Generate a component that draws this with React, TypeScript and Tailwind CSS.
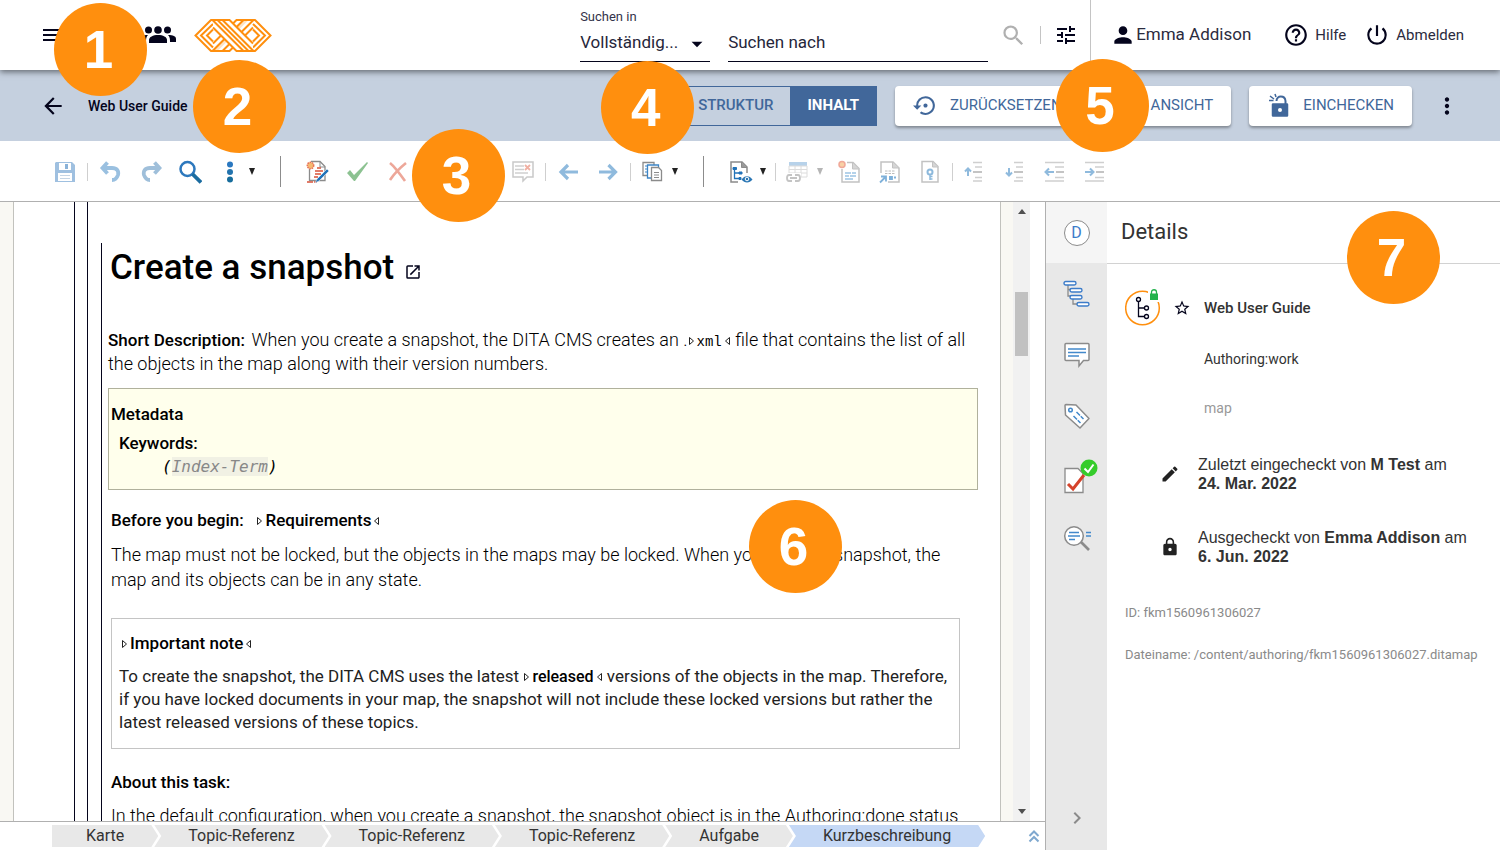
import React from "react";
import {
	MdArrowBack,
	MdArrowDropDown,
	MdChevronRight,
	MdEdit,
	MdHelpOutline,
	MdLock,
	MdMenu,
	MdMoreVert,
	MdOpenInNew,
	MdPerson,
	MdPowerSettingsNew,
	MdSearch,
	MdSettingsBackupRestore,
	MdStarBorder,
	MdTune,
	MdVisibility,
} from "react-icons/md";

function Badge({ n, className }: { n: number; className: string }) {
	return (
		<div
			className={`absolute z-30 flex size-[93px] items-center justify-center rounded-full bg-[#ff8f0e] pr-1 font-['Liberation_Sans',sans-serif] text-[53px] leading-none font-bold text-white ${className}`}
		>
			{n}
		</div>
	);
}

// one diagonal band of the logo, the other one is its mirror image
const band = "M19 8.500L42.500 32M18.500 1L49.500 32M28.500 1L59.500 32M35.500 1L59 24.500";
const arms = "M17 1L1.500 16.500 17 32M19 5L7 16.500 19 28.500M19 10.500L13 16.500 19 22.500M16.500 1H36M16.500 32H36";

function Logo() {
	return (
		<svg width="78" height="33" viewBox="0 0 78 33" fill="none" stroke="#ff8f0e" strokeWidth="2">
			<path d={arms} />
			<path d={arms} transform="matrix(-1 0 0 1 78 0)" />
			<path d={band} transform="matrix(-1 0 0 1 78 0)" />
			<path d="M23.500 1h5l31 31h-5z" transform="matrix(-1 0 0 1 78 0)" fill="#ff8f0e" stroke="none" opacity="0.25" />
			<path d="M19 8.500V2h17.500L59 24.500V31H42.500z" fill="#fff" stroke="none" />
			<path d={band} />
			<path d="M23.500 1l31 31" />
		</svg>
	);
}

function GroupIcon() {
	return (
		<svg width="36" height="20" viewBox="0 0 36 20" fill="#04041c">
			<circle cx="8.5" cy="5" r="3.5" />
			<circle cx="18" cy="5" r="3.8" />
			<circle cx="27.5" cy="5" r="3.5" />
			<path d="M9 18v-3c0-3 4-5 9-5s9 2 9 5v3z" />
			<path d="M0 17v-3c0-3 3-4 8-4-2 2-2 4-2 7zM36 17v-3c0-3-3-4-8-4 2 2 2 4 2 7z" />
		</svg>
	);
}

/* toolbar pieces */
function Tool({ label, children }: { label: string; children?: React.ReactNode }) {
	return (
		<button type="button" aria-label={label} className="flex h-10 w-10 shrink-0 items-center justify-center">
			<svg width="24" height="24" viewBox="0 0 24 24" fill="none">
				{children}
			</svg>
		</button>
	);
}

function Caret({ muted }: { muted?: boolean }) {
	return (
		<span className="z-10 -ml-2 flex w-5 shrink-0 justify-center">
			<svg width="6" height="7" viewBox="0 0 6 7" fill={muted ? "#b5b5b5" : "#222"}>
				<path d="M0 0h6L3 7z" />
			</svg>
		</span>
	);
}

function Sep() {
	return (
		<span className="flex w-[5px] shrink-0 justify-center">
			<span className="h-[18px] w-px bg-[#cfcfcf]" />
		</span>
	);
}

function TallSep() {
	return (
		<span className="flex w-9 shrink-0 justify-center">
			<span className="h-[31px] w-px bg-[#8c8c8c]" />
		</span>
	);
}

function Toolbar() {
	return (
		<div className="relative flex h-[61px] shrink-0 items-center border-b border-[#b0b0b0] bg-white px-[45px] pt-px">
			<Tool label="Speichern">
				<path d="M3 2h16l3 3v17H2V3z" fill="#9fc0e0" />
				<path d="M6 3h12v7H6z" fill="#fff" />
				<path d="M12 4h3v5h-3z" fill="#8ab2d8" />
				<path d="M5 13h14v8H5z" fill="#fff" />
				<path d="M7 15.500h10M7 18.500h10" stroke="#c5d5e5" />
			</Tool>
			<Sep />
			<Tool label="Rückgängig">
				<path d="M9.500 2.500L4.500 8l5 5.500M5 8h9c5 0 7 3 6 7-1 3-3 5-6 5" stroke="#9ac0e0" strokeWidth="3.8" />
			</Tool>
			<Tool label="Wiederherstellen">
				<path d="M16.500 2.500l5 5.500-5 5.500M21 8h-9c-5 0-7 3-6 7 1 3 3 5 6 5" stroke="#9fbfda" strokeWidth="3.800" />
			</Tool>
			<Tool label="Suchen">
				<circle cx="9.500" cy="9" r="7" stroke="#2d78bd" strokeWidth="2.500" />
				<path d="M14.500 14l8.500 8.500" stroke="#1b6ca0" strokeWidth="3.800" />
			</Tool>
			<Tool label="Mehr">
				<circle cx="12" cy="4.500" r="3" fill="#2b78c0" />
				<circle cx="12" cy="12" r="3" fill="#2273ae" />
				<circle cx="12" cy="19.500" r="3" fill="#176d9c" />
			</Tool>
			<Caret />
			<TallSep />
			<Tool label="Änderungen verfolgen">
				<path d="M5 1.500h9l5 5v14H3.500V9" stroke="#8b8b8b" strokeWidth="1.300" />
				<path d="M14 2v5h5" stroke="#8b8b8b" />
				<path d="M11 8h4M9 11h8M9 14h6M8 17h4M1 22h6M8 22h3" stroke="#d9533a" strokeWidth="1.500" />
				<circle cx="4.500" cy="5.500" r="3.200" fill="#f5b971" stroke="#e8735a" strokeWidth="1.500" strokeDasharray="1.5 0.800" />
				<path d="M21 9l2 2-10 10-4 2 2-4z" fill="#2273b9" stroke="#fff" strokeWidth="0.500" />
			</Tool>
			<Tool label="Änderung annehmen">
				<path d="M1 13l3-3 4 5L21 2l1 1L9 21H8z" fill="#8cc291" />
			</Tool>
			<Tool label="Änderung ablehnen">
				<path d="M4 3c5 4 10 11 15 18M20 3C15 7 8 14 4 20" stroke="#eda799" strokeWidth="2.600" />
			</Tool>
			<Tool label="Kommentar" />
			<Tool label="Hervorheben" />
			<Sep />
			<Tool label="Kommentar löschen">
				<path d="M2 2h20v15h-6l-4 4v-4H2z" stroke="#c9c9c9" strokeWidth="1.500" fill="#fff" />
				<path d="M4 6h9M4 9.500h9M4 13h13" stroke="#cfcfcf" strokeWidth="1.300" />
				<path d="M14 5l5 5M19 5l-5 5" stroke="#f0b0a3" strokeWidth="1.800" />
			</Tool>
			<Sep />
			<Tool label="Zurück">
				<path d="M5 12h17M12 5l-7 7 7 7" stroke="#8fbadd" strokeWidth="3.200" />
			</Tool>
			<Tool label="Vor">
				<path d="M3 12h17M12.500 5l7 7-7 7" stroke="#8fbadd" strokeWidth="3.200" />
			</Tool>
			<Sep />
			<Tool label="Einfügen">
				<path d="M2 2.500h11v13H2z" stroke="#8b8b8b" fill="#fff" strokeWidth="1.300" />
				<path d="M4 6h2M4 9h2M4 12h2" stroke="#3d85c6" />
				<path d="M6.500 5h11v13h-11z" stroke="#3d85c6" fill="#fff" strokeWidth="1.300" />
				<path d="M10.500 7.500h7l3 3v10h-10z" stroke="#8b8b8b" fill="#fff" strokeWidth="1.300" />
				<path d="M13 12.500h5M13 15h5M13 17.500h5" stroke="#8b8b8b" />
			</Tool>
			<Caret />
			<TallSep />
			<Tool label="Ansicht">
				<path d="M18 13V7l-5-5H2v20h7" stroke="#8b8b8b" strokeWidth="1.500" />
				<path d="M12.500 2v5.500H18" stroke="#8b8b8b" fill="#999" />
				<path d="M5.500 9v9.500H10M5.500 13H10" stroke="#2273b9" strokeWidth="1.300" />
				<path d="M4 7.500h3.500v2H4zM10 12h3v2h-3zM10 17.500h2v2h-2z" stroke="#2273b9" fill="#2273b9" />
				<path d="M12.500 19.500c3-4.500 8-4.500 11 0-3 4-8 4-11 0z" fill="#2a76b4" />
				<circle cx="18" cy="19" r="1.800" fill="#2a76b4" stroke="#fff" />
			</Tool>
			<Caret />
			<Sep />
			<Tool label="Tabelle">
				<path d="M3 2h18v4H3z" fill="#b7d2ea" />
				<path d="M3 6h18v11H3zM3 9.500h18M3 13h18M9 6v11M15 6v11" stroke="#dcdcdc" />
				<path d="M0 13h15v10H0z" fill="#fff" />
				<path d="M6 15H3q-2 0-2 3t2 3h3M9 15h3q2 0 2 3t-2 3H9M4 18h7" stroke="#c4c4c4" strokeWidth="1.800" />
			</Tool>
			<Caret muted />
			<Tool label="Neues Thema">
				<path d="M9 2.500h6l6 6V22H4V9" stroke="#c2c2c2" strokeWidth="1.500" />
				<path d="M14.500 3v6H21" stroke="#c2c2c2" fill="#d5d5d5" />
				<path d="M7 13h6M14 13h4M7 16h4M12 16h6M7 19h8" stroke="#9cc3e3" strokeWidth="1.300" />
				<circle cx="4" cy="4.500" r="3" fill="#f8d0a5" stroke="#f0a898" strokeWidth="1.500" />
			</Tool>
			<Tool label="Referenz">
				<path d="M3 13V2h12l6 6v14H10" stroke="#c2c2c2" strokeWidth="1.500" />
				<path d="M14.500 2v6H21" stroke="#c2c2c2" fill="#d5d5d5" />
				<path d="M7 11h10M7 13.500h10" stroke="#bcbcbc" strokeDasharray="2.500 1" />
				<path d="M2 22.500l5-5M3 16.500h5v5M11 17h3v2h-3M16 17.500h2" stroke="#7fb1da" strokeWidth="1.800" />
			</Tool>
			<Tool label="Schlüssel">
				<path d="M4 1.500h11l5 5V22H4z" stroke="#c2c2c2" strokeWidth="1.500" />
				<path d="M14.500 2v5H20" stroke="#c2c2c2" fill="#d5d5d5" />
				<circle cx="12" cy="12" r="2.500" stroke="#8db9dc" strokeWidth="2" />
				<path d="M12 14.500V20M12 16.500h2.500M12 19h2.500" stroke="#8db9dc" strokeWidth="1.500" />
			</Tool>
			<Sep />
			<Tool label="Nach oben">
				<path d="M10 2.500h9M12 7h7M12 17.500h7M10 21h9" stroke="#cfcfcf" strokeWidth="1.500" />
				<path d="M10 12h9" stroke="#b0b0b0" strokeWidth="1.500" />
				<path d="M5 16V9M2 11.500l3-3 3 3" stroke="#8fbadd" strokeWidth="2" />
			</Tool>
			<Tool label="Nach unten">
				<path d="M11 2.500h9M13 7h7M13 17.500h7M11 21h9" stroke="#cfcfcf" strokeWidth="1.500" />
				<path d="M11 12h9" stroke="#b0b0b0" strokeWidth="1.500" />
				<path d="M6 8v7M3 12.500l3 3 3-3" stroke="#8fbadd" strokeWidth="2" />
			</Tool>
			<Tool label="Höher stufen">
				<path d="M2 2.500h19M12 7h9M12 17.500h9M2 21h19" stroke="#cfcfcf" strokeWidth="1.500" />
				<path d="M13 12h8" stroke="#b0b0b0" strokeWidth="1.500" />
				<path d="M3 12h8M6 8.500L2.500 12 6 15.500" stroke="#8fbadd" strokeWidth="2" />
			</Tool>
			<Tool label="Tiefer stufen">
				<path d="M2 2.500h19M12 7h9M12 17.500h9M2 21h19" stroke="#cfcfcf" strokeWidth="1.500" />
				<path d="M13 12h8" stroke="#b0b0b0" strokeWidth="1.500" />
				<path d="M2 12h8M7 8.500l3.500 3.500L7 15.500" stroke="#8fbadd" strokeWidth="2" />
			</Tool>
			<Badge n={3} className="-top-3 left-[412px]" />
		</div>
	);
}

/* tag markers around inline elements */
function Mark({ children, className = "" }: { children: React.ReactNode; className?: string }) {
	return (
		<span className={`leading-none ${className}`}>
			<svg className="mr-0.5 inline align-baseline" width="7" height="10" viewBox="0 0 7 10" fill="none" stroke="#222">
				<path d="M1.500 1.500v7l4-3.500z" />
			</svg>
			{children}
			<svg className="ml-0.5 inline align-baseline" width="7" height="10" viewBox="0 0 7 10" fill="none" stroke="#222">
				<path d="M5.500 1.500v7l-4-3.500z" />
			</svg>
		</span>
	);
}

function Header() {
	return (
		<header className="relative z-20 flex h-[70px] shrink-0 items-stretch bg-white shadow-[0_2px_6px_rgba(0,0,0,0.5)]">
			<div className="flex flex-1 items-center pl-10">
				<button type="button" aria-label="Menü">
					<MdMenu size={24} color="#04041c" />
				</button>
				<button type="button" aria-label="Gruppen" className="ml-[76px]">
					<GroupIcon />
				</button>
				<a href="#" aria-label="Startseite" className="ml-[18px]">
					<Logo />
				</a>
			</div>
			<div className="flex h-[62px] gap-[18px]">
				<div className="relative flex w-[130px] flex-col border-b border-[#04041c] pt-2">
					<label htmlFor="scope" className="text-[13px] leading-[18px] text-[#33334a]">
						Suchen in
					</label>
					<select id="scope" className="h-[34px] w-full appearance-none bg-transparent text-[17px] text-[#26263a] outline-none">
						<option>Vollständig...</option>
					</select>
					<MdArrowDropDown className="pointer-events-none absolute right-0 bottom-1" size={26} color="#04041c" />
				</div>
				<input
					aria-label="Suchen nach"
					placeholder="Suchen nach"
					className="w-[260px] border-b border-[#04041c] pt-6 text-[17px] outline-none placeholder:text-[#26263a]"
				/>
			</div>
			<div className="flex items-center border-r border-[#c4c4c4] pr-3 pl-3">
				<button type="button" aria-label="Suchen">
					<MdSearch size={27} color="#b0b0b0" />
				</button>
				<span className="mx-[13px] h-[18px] w-px bg-[#c4c4c4]" />
				<button type="button" aria-label="Filter">
					<MdTune size={24} color="#04041c" />
				</button>
			</div>
			<div className="flex items-center pr-9 pl-[19px] text-[15px] text-[#2b2b3e]">
				<a href="#" className="flex items-center text-[17px]">
					<MdPerson size={26} color="#04041c" />
					Emma Addison
				</a>
				<a href="#" className="ml-8 flex items-center gap-[6px]">
					<MdHelpOutline size={26} color="#04041c" />
					Hilfe
				</a>
				<a href="#" className="ml-[18px] flex items-center gap-[6px]">
					<MdPowerSettingsNew size={26} color="#04041c" />
					Abmelden
				</a>
			</div>
			<Badge n={1} className="top-[3px] left-[54px]" />
		</header>
	);
}

const barButton = "flex h-10 items-center rounded bg-white px-[18px] text-[#41679a] shadow-[0_2px_3px_rgba(0,0,0,0.35)]";

function ActionBar() {
	return (
		<div className="relative flex h-[71px] shrink-0 items-center bg-[#c5d0df] pr-10 pl-10 text-[15px]">
			<button type="button" aria-label="Zurück">
				<MdArrowBack size={26} color="#04041c" />
			</button>
			<h2 className="ml-[22px] flex-1 text-sm font-medium text-[#04041c]">Web User Guide</h2>
			<div className="relative flex h-10 border border-[#41679a] font-medium">
				<button type="button" className="px-[17px] text-[#41679a]">
					STRUKTUR
				</button>
				<button type="button" className="bg-[#41679a] px-[17px] font-bold text-white">
					INHALT
				</button>
				<Badge n={4} className="-top-[26px] -left-[80px]" />
			</div>
			<button type="button" className={`${barButton} ml-[18px] gap-3`}>
				<MdSettingsBackupRestore size={25} />
				ZURÜCKSETZEN
			</button>
			<div className="relative ml-[18px]">
				<button type="button" className={`${barButton} gap-[10px]`}>
					<MdVisibility size={25} />
					ANSICHT
				</button>
				<Badge n={5} className="-top-[27px] -left-[42px]" />
			</div>
			<button type="button" className={`${barButton} ml-[18px] gap-[10px]`}>
				<svg width="26" height="26" viewBox="0 0 26 26" fill="none" stroke="#41679a">
					<path d="M6 11.500h14v11H6z" fill="#41679a" strokeWidth="2.500" strokeLinejoin="round" />
					<path d="M9.500 8c0-6 8.500-6 9 0v3" strokeWidth="2" />
					<path d="M2 7.500h4.500M3 3l4 3M8 1l1 3" strokeWidth="1.500" />
					<circle cx="13" cy="17" r="2" fill="#fff" stroke="none" />
				</svg>
				EINCHECKEN
			</button>
			<button type="button" aria-label="Mehr" className="ml-[22px]">
				<MdMoreVert size={26} color="#04041c" />
			</button>
			<Badge n={2} className="-top-[10px] left-[193px]" />
		</div>
	);
}

function Editor() {
	return (
		<div className="relative flex min-h-0 flex-1 overflow-hidden">
			<div className="w-[13px] shrink-0 bg-[#f9f8f3]" />
			<div className="flex flex-1 border-x border-[#c2c2bd] pl-[60px]">
				<div className="border-l border-[#04041c] pl-3" />
				<div className="flex-1 border-l border-[#04041c] pt-[41px] pr-[22px] pl-[13px]">
					<div className="h-full border-l border-[#04041c] pl-[6px] text-[17px] leading-6 text-[#222]">
						<h1 className="flex items-center gap-[10px] pt-[3px] pl-[2px] text-[35px] leading-[44px] font-medium text-black">
							Create a snapshot
							<MdOpenInNew size={18} color="#04041c" className="mt-2" />
						</h1>
						<p className="mt-[38px] text-lg leading-6 font-light text-black">
							<b className="mr-0.5 text-[17px] leading-none font-medium">Short Description:</b> When you create a snapshot, the DITA
							CMS creates an .<Mark className="font-['Liberation_Mono',monospace] text-[14px]">xml</Mark> file that contains the
							list of all the objects in the map along with their version numbers.
						</p>
						<section className="mt-3 h-[102px] border border-[#b0b19c] bg-[#ffffec] px-[2px] pt-[13px] font-medium text-black">
							<h3 className="leading-6">Metadata</h3>
							<h4 className="mt-[5px] pl-2 leading-6">Keywords:</h4>
							<p className="pl-[51px] font-['DejaVu_Sans_Mono',monospace] text-base font-normal italic">
								(<span className="bg-[#f1f1e4] text-[#888]">Index-Term</span>)
							</p>
						</section>
						<div className="pl-[3px]">
							<h3 className="mt-[18px] font-medium text-black">
								Before you begin: &nbsp;&nbsp;
								<Mark>Requirements</Mark>
							</h3>
							<p className="mt-[10px] mr-3 text-lg leading-[25px] font-light text-black">
								The map must not be locked, but the objects in the maps may be locked. When you create a snapshot, the map and its
								objects can be in any state.
							</p>
							<section className="mt-[26px] mr-[18px] h-[131px] border border-[#c4c4c4] px-[7px] pt-3">
								<h4 className="pl-[2px] leading-6 font-medium text-black">
									<Mark>Important note</Mark>
								</h4>
								<p className="mt-[10px] leading-[23px]">
									To create the snapshot, the DITA CMS uses the latest{" "}
									<Mark className="text-base font-medium text-black">released</Mark> versions of the objects in the map. Therefore, if
									you have locked documents in your map, the snapshot will not include these locked versions but rather the latest
									released versions of these topics.
								</p>
							</section>
							<h3 className="mt-[21px] font-medium text-black">About this task:</h3>
							<p className="mt-[9px] text-lg leading-[25px] font-light text-black">
								In the default configuration, when you create a snapshot, the snapshot object is in the Authoring:done status
							</p>
						</div>
					</div>
				</div>
			</div>
			<div className="w-3 shrink-0 bg-[#f9f8f3]" />
			{/* scrollbar */}
			<div className="mr-[15px] flex w-[17px] shrink-0 flex-col items-center bg-[#f1f1f1] py-[7px]">
				<svg width="8" height="5" viewBox="0 0 8 5" fill="#505050">
					<path d="M0 5h8L4 0z" />
				</svg>
				<div className="mt-[78px] h-16 w-[13px] bg-[#c1c1c1]" />
				<svg className="mt-auto" width="8" height="5" viewBox="0 0 8 5" fill="#505050">
					<path d="M0 0h8L4 5z" />
				</svg>
			</div>
			<Badge n={6} className="top-[298px] left-[749px]" />
		</div>
	);
}

const crumbs = ["Karte", "Topic-Referenz", "Topic-Referenz", "Topic-Referenz", "Aufgabe", "Kurzbeschreibung"];

function Breadcrumbs() {
	return (
		<nav className="flex h-[29px] shrink-0 items-center justify-between border-t border-[#b0b0b0] pr-[5px] pl-[52px] text-base leading-[22px] text-[#333]">
			<div className="flex">
				{crumbs.map((label, i) => (
					<a
						key={i}
						href="#"
						className={
							i === 0
								? "bg-[#e8e8e8] px-[34px] [clip-path:polygon(0_0,calc(100%-7px)_0,100%_50%,calc(100%-7px)_100%,0_100%)]"
								: `-ml-1 px-[34px] [clip-path:polygon(0_0,calc(100%-7px)_0,100%_50%,calc(100%-7px)_100%,0_100%,7px_50%)] ${
										i === crumbs.length - 1 ? "bg-[#c5d8f5]" : "bg-[#e8e8e8]"
									}`
						}
					>
						{label}
					</a>
				))}
			</div>
			<button type="button" aria-label="Aufklappen">
				<svg width="12" height="14" viewBox="0 0 12 14" fill="none" stroke="#7fa8cf" strokeWidth="2">
					<path d="M1.500 7L6 2.500 10.500 7M1.500 12.500L6 8l4.500 4.500" />
				</svg>
			</button>
		</nav>
	);
}

function RailButton({ label, active, children }: { label: string; active?: boolean; children: React.ReactNode }) {
	return (
		<button
			type="button"
			aria-label={label}
			className={`flex h-[61px] w-full items-center justify-center ${active ? "bg-[#f5f5f5]" : ""}`}
		>
			{children}
		</button>
	);
}

function Rail() {
	return (
		<div className="flex w-[61px] shrink-0 flex-col items-center bg-[#e8e8e8]">
			<RailButton label="Details" active>
				<span className="flex size-[26px] items-center justify-center rounded-full border border-[#8b8b8b] bg-white text-base text-[#3d7cc9]">
					D
				</span>
			</RailButton>
			<RailButton label="Struktur">
				<svg width="28" height="28" viewBox="0 0 28 28" fill="none">
					<path d="M5 5v11h5M5 9.500h4M10 18v6h5" stroke="#8b8b8b" strokeWidth="1.300" />
					<g stroke="#3d7cc9" strokeWidth="1.400" fill="#fff">
						<rect x="1" y="1.500" width="12" height="3.500" rx="1.700" />
						<rect x="7" y="8.500" width="12" height="3.500" rx="1.700" />
						<rect x="7" y="15.500" width="12" height="3.500" rx="1.700" />
						<rect x="14" y="22.500" width="12" height="3.500" rx="1.700" />
					</g>
				</svg>
			</RailButton>
			<RailButton label="Kommentare">
				<svg width="28" height="28" viewBox="0 0 28 28" fill="none">
					<path d="M3 2.500h22q1 0 1 1v15q0 1-1 1h-4.500L16 25v-5.500H3q-1 0-1-1v-15q0-1 1-1z" fill="#fff" stroke="#8b8b8b" strokeWidth="1.500" />
					<path d="M5 8h18M5 11.500h18M5 15h11" stroke="#4389cb" strokeWidth="1.500" />
				</svg>
			</RailButton>
			<RailButton label="Schlagwörter">
				<svg width="28" height="28" viewBox="0 0 28 28" fill="none">
					<path d="M2 3.500q0-1 1-1l10 .5L26 16.500 17 26 2.500 13z" fill="#fff" stroke="#8b8b8b" strokeWidth="1.500" strokeLinejoin="round" />
					<circle cx="7.500" cy="8" r="1.800" stroke="#4389cb" strokeWidth="1.500" />
					<path d="M13.500 10l7 7M10.500 14l7 7" stroke="#4389cb" strokeWidth="1.500" strokeDasharray="5 1" />
				</svg>
			</RailButton>
			<RailButton label="Prüfung">
				<svg width="36" height="36" viewBox="0 0 36 36" fill="none" className="ml-2">
					<path d="M2 9.500h13l5 5v19H2z" fill="#fff" stroke="#8b8b8b" strokeWidth="1.300" />
					<path d="M5 25l5 5L21 16" stroke="#d5432b" strokeWidth="3" />
					<circle cx="26" cy="9" r="8.500" fill="#35cc2b" />
					<path d="M21.500 9.500l3.500 3.500 5.500-7.500" stroke="#fff" strokeWidth="2" />
				</svg>
			</RailButton>
			<RailButton label="Analyse">
				<svg width="28" height="28" viewBox="0 0 28 28" fill="none">
					<path d="M18 18l8 8" stroke="#8b8b8b" strokeWidth="2.600" />
					<circle cx="11" cy="12" r="9.300" fill="#fff" stroke="#8b8b8b" strokeWidth="1.500" />
					<path d="M6 8.500h10M5 12h12M6 15.500h6M23 8.500h5M23 12h5" stroke="#4389cb" strokeWidth="1.500" />
				</svg>
			</RailButton>
			<button type="button" aria-label="Einklappen" className="mt-auto mb-5">
				<MdChevronRight size={24} color="#8b8b8b" />
			</button>
		</div>
	);
}

function Details() {
	return (
		<div className="relative flex-1 text-[#333]">
			<h2 className="flex h-[62px] items-center border-b border-[#d2d2d2] pb-[2px] pl-[14px] text-[22px]">Details</h2>
			<div className="flex flex-col pl-[18px]">
				<div className="mt-[24px] flex h-10 items-center">
					<svg width="37" height="40" viewBox="0 0 37 40" fill="none">
						<circle cx="17.500" cy="20" r="16.800" stroke="#ff8f0e" strokeWidth="1.500" />
						<path d="M23 0h13v14H23z" fill="#fff" />
						<path d="M13.500 13v15.500H20M13.500 20H20" stroke="#04041c" strokeWidth="1.300" />
						<g stroke="#04041c" strokeWidth="1.300" fill="#fff">
							<circle cx="13.500" cy="11.500" r="2" />
							<circle cx="21.500" cy="20" r="2" />
							<circle cx="21.500" cy="28.500" r="2" />
						</g>
						<path d="M25 5.500h8V12h-8z" fill="#22b24c" />
						<path d="M26.500 6V4c0-3 5-3 5 0v2" stroke="#22b24c" strokeWidth="1.300" />
					</svg>
					<MdStarBorder size={18} color="#04041c" className="ml-[11px]" />
					<span className="ml-[13px] text-[15px] font-medium">Web User Guide</span>
				</div>
				<p className="mt-[21px] pl-[79px] text-sm leading-5">Authoring:work</p>
				<p className="mt-[29px] pl-[79px] text-sm leading-5 text-[#999]">map</p>
				<div className="mt-[37px] flex items-center gap-[18px] pl-[35px] font-['Liberation_Sans',sans-serif] leading-[19px]">
					<MdEdit size={20} color="#222" className="shrink-0" />
					<p>
						Zuletzt eingecheckt von <b>M Test</b> am
						<br />
						<b>24. Mar. 2022</b>
					</p>
				</div>
				<div className="mt-[35px] flex items-center gap-[18px] pl-[35px] font-['Liberation_Sans',sans-serif] leading-[19px]">
					<MdLock size={20} color="#222" className="shrink-0" />
					<p>
						Ausgecheckt von <b>Emma Addison</b> am
						<br />
						<b>6. Jun. 2022</b>
					</p>
				</div>
				<p className="mt-[37px] text-[13px] leading-5 text-[#8a8a8a]">ID: fkm1560961306027</p>
				<p className="mt-[22px] text-[13px] leading-5 text-[#8a8a8a]">Dateiname: /content/authoring/fkm1560961306027.ditamap</p>
			</div>
			<Badge n={7} className="top-[9px] right-[60px]" />
		</div>
	);
}

export default function App() {
	return (
		<div className="flex h-screen flex-col overflow-hidden bg-white font-['Roboto',sans-serif]">
			<Header />
			<ActionBar />
			<Toolbar />
			<main className="flex min-h-0 flex-1">
				<div className="flex min-w-0 flex-1 flex-col">
					<Editor />
					<Breadcrumbs />
				</div>
				<aside className="flex w-[455px] shrink-0 border-l border-[#b0b0b0]">
					<Rail />
					<Details />
				</aside>
			</main>
		</div>
	);
}
